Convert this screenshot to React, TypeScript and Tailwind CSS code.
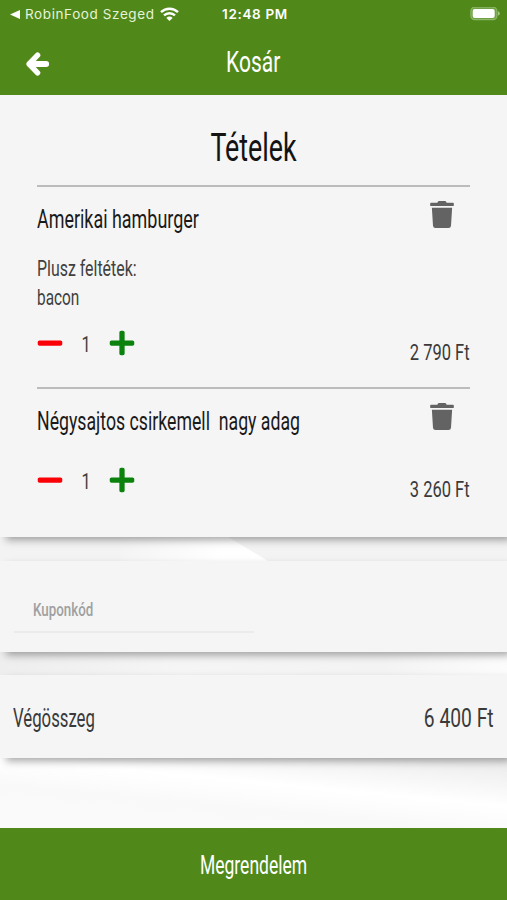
import { useState } from 'react';
import { FaMinus, FaPlus, FaTrash } from 'react-icons/fa';

interface CartItem {
  id: number;
  name: string;
  extras: string[];
  quantity: number;
  price: string;
  nameClass: string;
}

const initialItems: CartItem[] = [
  {
    id: 1,
    name: 'Amerikai hamburger',
    extras: ['bacon'],
    quantity: 1,
    price: '2 790 Ft',
    nameClass: 'scale-x-[0.717]',
  },
  {
    id: 2,
    name: 'Négysajtos csirkemell  nagy adag',
    extras: [],
    quantity: 1,
    price: '3 260 Ft',
    nameClass: 'scale-x-[0.708]',
  },
];

function StatusBar() {
  return (
    <div className="grid h-7 grid-cols-3 items-center pl-[10px] pr-[7px] font-['Inter',sans-serif] text-[13.5px] leading-7 text-white">
      <div className="flex items-center whitespace-nowrap">
        <svg className="mr-[5px] h-[9px] w-[10px] shrink-0" viewBox="0 0 10 9" fill="currentColor">
          <path d="M0 4.5 10 0v9z" />
        </svg>
        <span className="tracking-[0.6px] text-[#e6f3d8]">RobinFood Szeged</span>
        <svg className="ml-[5px] h-[14px] w-[19px] shrink-0" viewBox="0 0 19 14" fill="none" stroke="currentColor" strokeWidth="2.4">
          <path d="M1 5.2a12.2 12.2 0 0 1 17 0" />
          <path d="M4 8.4a8 8 0 0 1 11 0" />
          <path d="M9.5 14 6.4 10.9a4.4 4.4 0 0 1 6.2 0z" fill="currentColor" stroke="none" />
        </svg>
      </div>
      <span className="text-center font-semibold tracking-[0.65px]">12:48 PM</span>
      <svg className="h-[14px] w-[30px] justify-self-end" viewBox="0 0 30 14">
        <rect x="0.9" y="0.2" width="26" height="12.4" rx="3.8" fill="#6fa043" stroke="#8db867" strokeWidth="1.2" />
        <rect x="2.7" y="1.9" width="22" height="9" rx="2" fill="#fff" />
        <path d="M28 4.2c2.4.8 2.4 3.6 0 4.4z" fill="#a5c785" />
      </svg>
    </div>
  );
}

function BackArrow() {
  return (
    <svg className="h-[24px] w-[24px]" viewBox="0 0 24 24" fill="none" stroke="currentColor" strokeWidth="5.4">
      <path d="M12.6 3.2 4.1 12l8.5 8.8" strokeLinecap="round" strokeLinejoin="round" />
      <path d="M5 12h16.3" strokeWidth="5.8" strokeLinecap="round" />
    </svg>
  );
}

function Backdrop() {
  return (
    <svg className="absolute inset-0 h-full w-full" viewBox="0 0 507 733" preserveAspectRatio="none">
      <defs>
        <linearGradient id="beam" x1="0" x2="1" y1="0" y2="0.1">
          <stop offset="0" stopColor="#f3f3f3" />
          <stop offset="0.75" stopColor="#ffffff" />
        </linearGradient>
        <linearGradient id="band" x1="0" x2="1" y1="0" y2="0">
          <stop offset="0" stopColor="#eeeeee" />
          <stop offset="0.35" stopColor="#f5f5f5" />
          <stop offset="0.75" stopColor="#f3f3f3" />
          <stop offset="1" stopColor="#fcfcfc" />
        </linearGradient>
        <linearGradient id="floor" gradientUnits="userSpaceOnUse" x1="262" y1="650" x2="254" y2="733">
          <stop offset="0" stopColor="#eeeeee" />
          <stop offset="0.15" stopColor="#f4f4f4" />
          <stop offset="0.45" stopColor="#ffffff" />
          <stop offset="0.58" stopColor="#fdfdfd" />
          <stop offset="0.78" stopColor="#f9f9f9" />
          <stop offset="1" stopColor="#fafafa" />
        </linearGradient>
      </defs>
      <rect width="507" height="733" fill="#f3f3f3" />
      <path d="M120 442h108l40 24v3H120z" fill="url(#beam)" />
      <rect y="556" width="507" height="25" fill="url(#band)" />
      <rect y="662" width="507" height="71" fill="url(#floor)" />
    </svg>
  );
}

interface CartRowProps {
  item: CartItem;
  onChange: (id: number, step: number) => void;
  onRemove: (id: number) => void;
}

function CartRow({ item, onChange, onRemove }: CartRowProps) {
  return (
    <li className="border-t-2 border-[#bcbcbc]">
      <div className="flex items-start justify-between pr-4">
        <h2 className={`mt-4 origin-left whitespace-pre text-[25px] font-[450] leading-[34px] text-[#1a1a1a] ${item.nameClass}`}>
          {item.name}
        </h2>
        <button className="-ml-20 mt-[14px] text-[27px] text-[#636363]" onClick={() => onRemove(item.id)}>
          <FaTrash className="w-[24px]" />
        </button>
      </div>
      {item.extras.length > 0 && (
        <div className="mt-[17px] text-[21.5px] font-[450] leading-[29px] text-[#404040]">
          <p className="origin-left scale-x-[0.74]">Plusz feltétek:</p>
          <p className="origin-left scale-x-[0.715]">{item.extras.join(', ')}</p>
        </div>
      )}
      <div className={item.extras.length > 0 ? 'mt-[10px] flex justify-between' : 'mt-[20px] flex justify-between'}>
        <div className="flex h-[41px] items-center pt-px">
          <button className="text-[28px] text-[#fb0007]" onClick={() => onChange(item.id, -1)}>
            <FaMinus className="w-[26px]" />
          </button>
          <span className="w-[46px] scale-x-[0.74] pt-[4px] text-center text-[22px] font-[450] leading-[30px] text-[#404040]">
            {item.quantity}
          </span>
          <button className="text-[28px] text-[#0a820d]" onClick={() => onChange(item.id, 1)}>
            <FaPlus className="w-[26px]" />
          </button>
        </div>
        <span className="mt-[15px] h-[50px] origin-right scale-x-[0.732] text-[22.5px] font-[450] leading-[30px] text-[#3a3a3a]">
          {item.price}
        </span>
      </div>
    </li>
  );
}

export default function App() {
  const [items, setItems] = useState<CartItem[]>(initialItems);
  const [coupon, setCoupon] = useState('');

  const handleChange = (id: number, step: number) => {
    setItems(prev =>
      prev.map(item => (item.id === id ? { ...item, quantity: Math.max(1, item.quantity + step) } : item))
    );
  };

  const handleRemove = (id: number) => {
    setItems(prev => prev.filter(item => item.id !== id));
  };

  return (
    <div className="flex h-[900px] w-full flex-col overflow-hidden bg-[#f5f5f5] font-['Roboto',sans-serif]">
      <header className="h-[95px] shrink-0 bg-[#50891a] text-white">
        <StatusBar />
        <div className="grid h-[67px] grid-cols-3 items-center px-[25px]">
          <button className="justify-self-start pt-[5px]">
            <BackArrow />
          </button>
          <h1 className="scale-x-[0.725] text-center text-[29px] font-[450] leading-[40px]">Kosár</h1>
        </div>
      </header>

      <main className="relative h-[733px] shrink-0 overflow-hidden">
        <Backdrop />
        <div className="relative flex flex-col">
          <section className="h-[442px] bg-[#f5f5f5] px-[37px] pt-[29px] shadow-[5px_4px_8px_-1px_rgba(0,0,0,0.36)]">
            <h2 className="mb-[13px] scale-x-[0.705] text-center text-[38px] font-[450] leading-[48px] text-[#131313]">
              Tételek
            </h2>
            <ul>
              {items.map(item => (
                <CartRow key={item.id} item={item} onChange={handleChange} onRemove={handleRemove} />
              ))}
            </ul>
          </section>

          <section className="mt-6 h-[91px] bg-[#f5f5f5] px-[14px] pt-[28px] shadow-[5px_4px_8px_-1px_rgba(0,0,0,0.36)]">
            <div className="h-[44px] w-[240px] border-b-2 border-[#ebebeb] pl-[19px] pt-px">
              <input
                className="w-[250px] origin-left scale-x-[0.702] bg-transparent text-[19px] font-medium leading-[40px] outline-none placeholder:text-[#a0a0a0]"
                placeholder="Kuponkód"
                value={coupon}
                onChange={e => setCoupon(e.target.value)}
              />
            </div>
          </section>

          <section className="mt-[23px] flex h-[83px] items-center justify-between bg-[#f5f5f5] px-[13px] pt-[5px] text-[25px] font-[450] text-[#3a3a3a] shadow-[5px_4px_8px_-1px_rgba(0,0,0,0.36)]">
            <span className="origin-left scale-x-[0.67]">Végösszeg</span>
            <span className="origin-right scale-x-[0.77]">6 400 Ft</span>
          </section>
        </div>
      </main>

      <button className="h-[72px] shrink-0 bg-[#50891a] pt-[4px] text-[25px] font-[450] text-white">
        <span className="inline-block scale-x-[0.7]">Megrendelem</span>
      </button>
    </div>
  );
}
